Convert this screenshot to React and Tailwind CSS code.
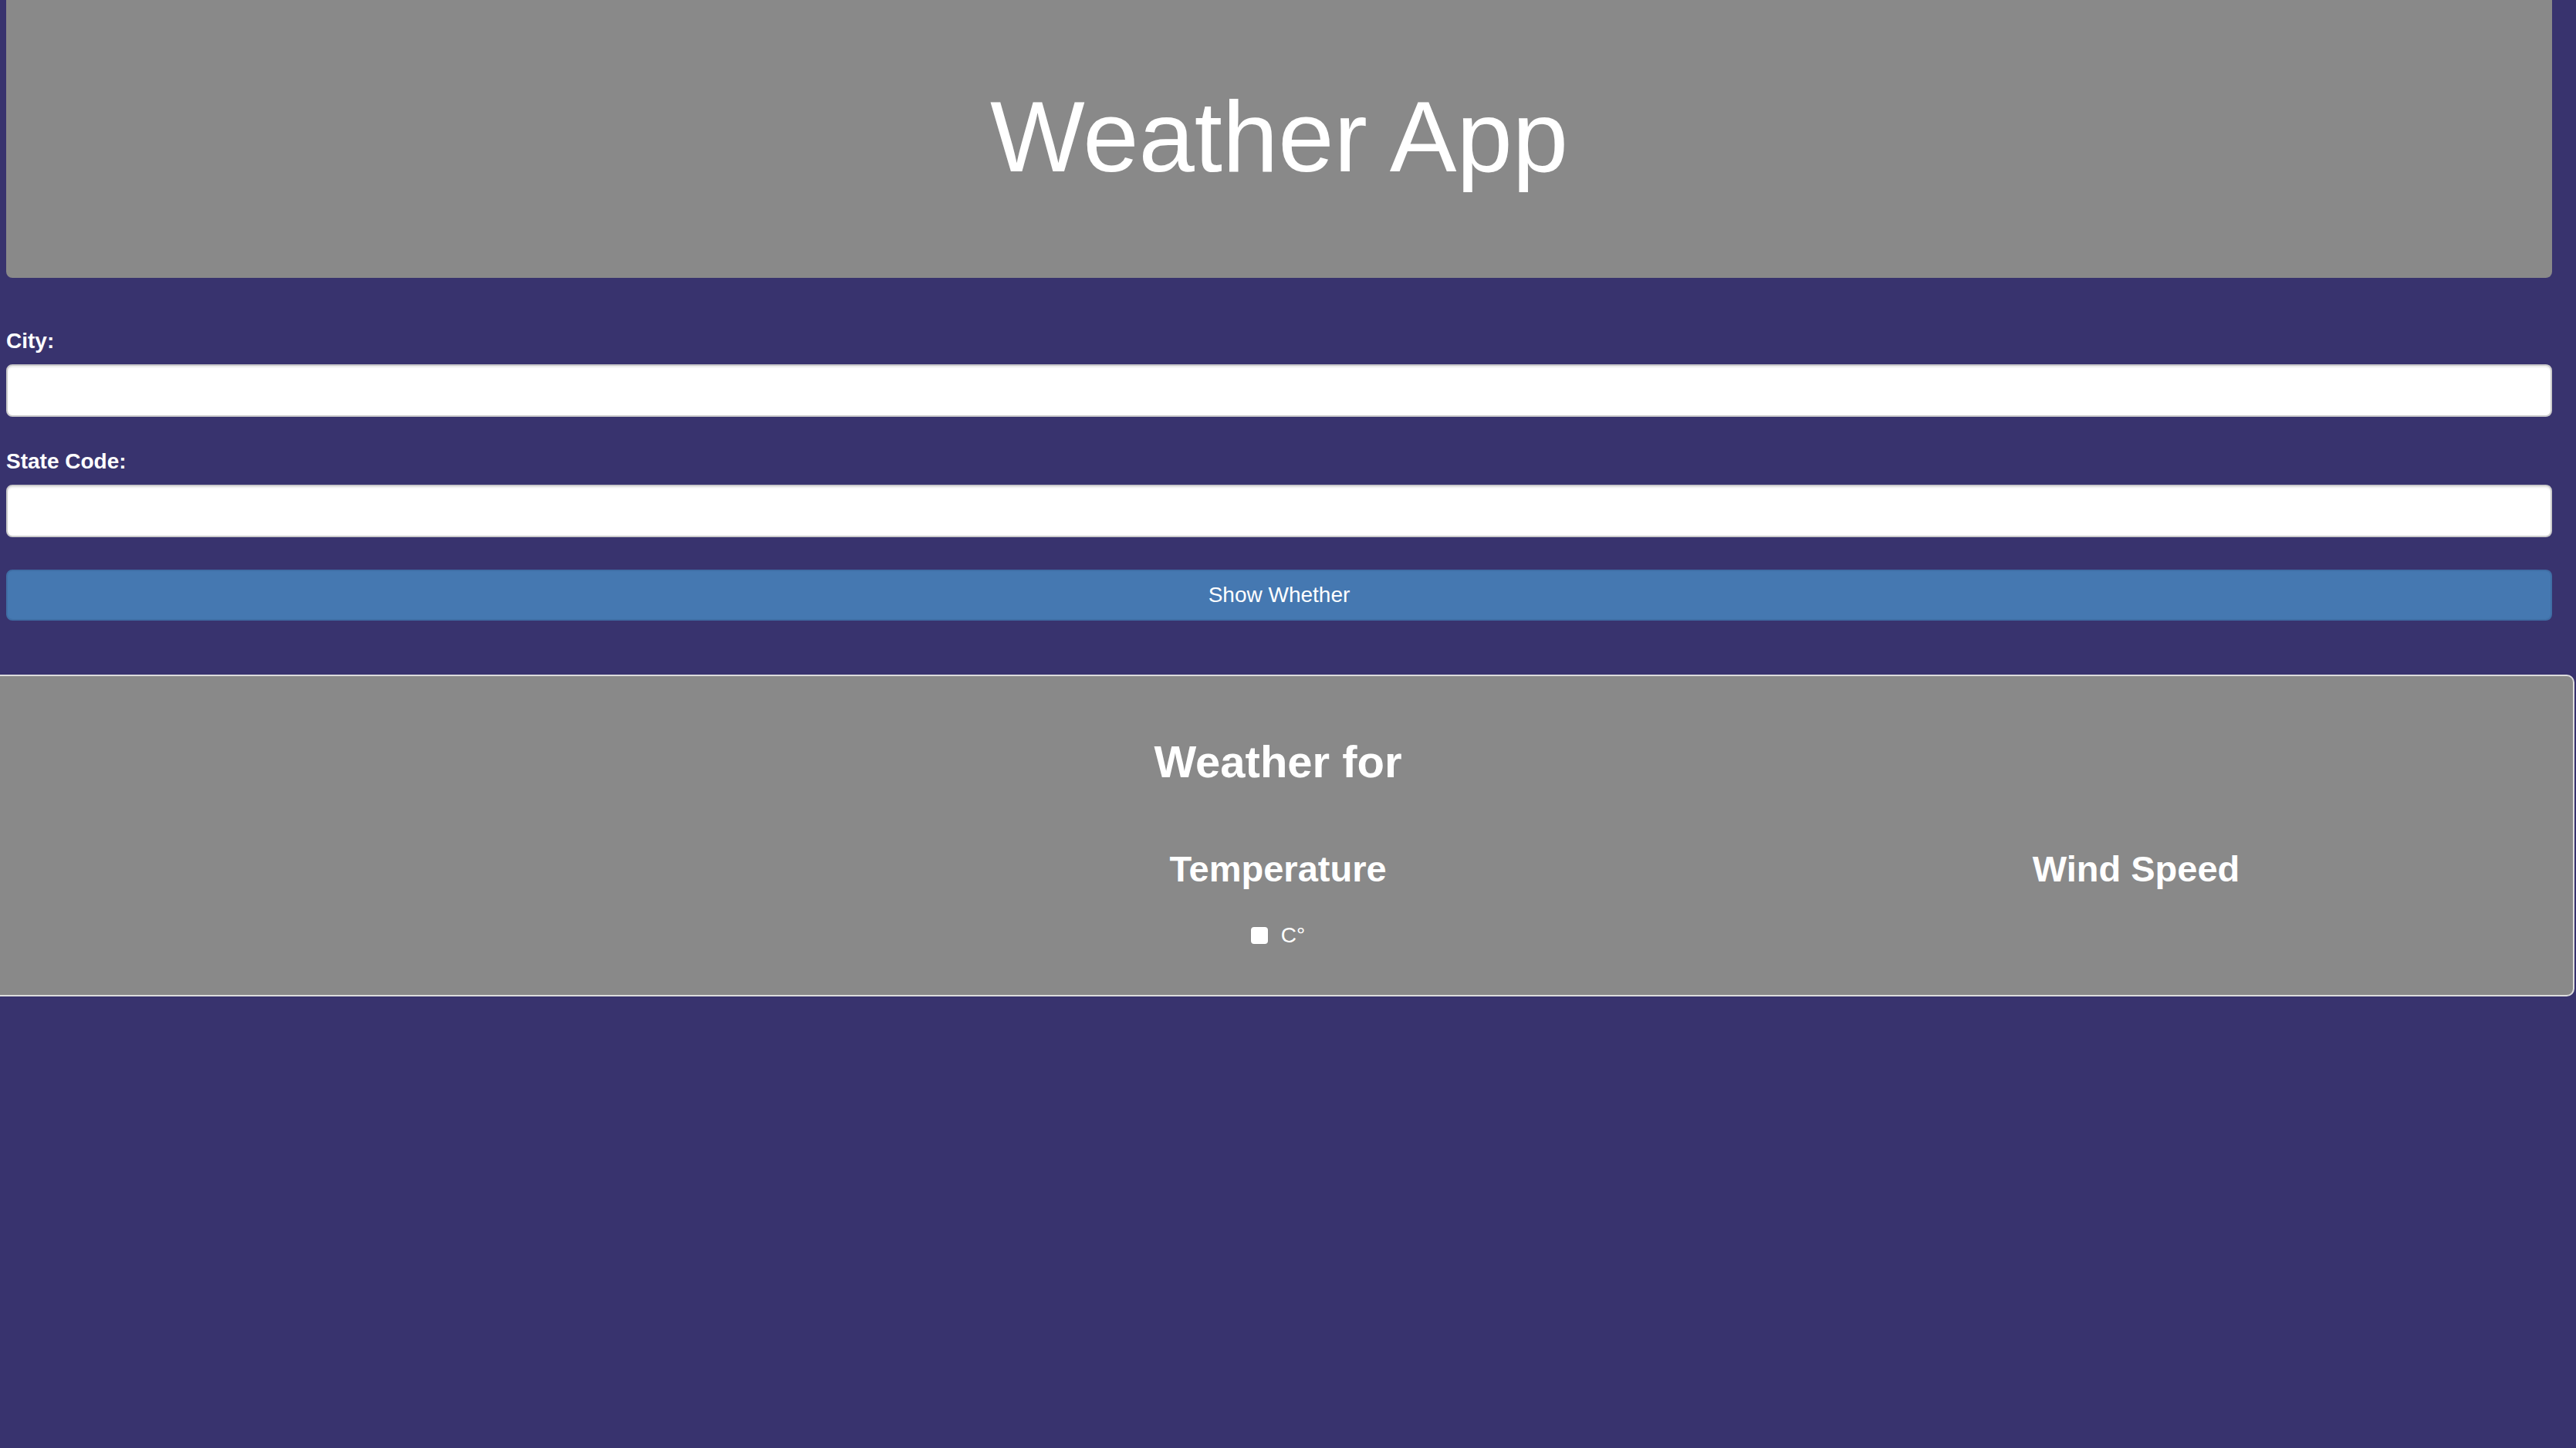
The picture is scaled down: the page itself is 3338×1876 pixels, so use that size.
import { useState } from 'react';

const Field = ({ label, value, onChange, className }) => (
  <div className={className}>
    <label className="block text-[28px] font-bold leading-[40px] text-white mb-[10px]">
      {label}
    </label>
    <input
      type="text"
      value={value}
      onChange={(e) => onChange(e.target.value)}
      className="block w-full h-[68px] px-[24px] bg-white border-2 border-[#cccccc] rounded-[8px] shadow-[inset_0_2px_2px_rgba(0,0,0,0.08)] text-[28px] text-[#555] outline-none"
    />
  </div>
);

export default function App() {
  const [city, setCity] = useState('');
  const [state, setState] = useState('');
  const [celsius, setCelsius] = useState(false);

  return (
    <div className="min-h-screen bg-[#38336e] font-['Liberation_Sans',Arial,sans-serif] text-white">
      {/* header */}
      <header className="ml-[8px] mr-[31px] h-[360px] bg-[#898989] rounded-b-[8px] flex items-center justify-center pb-[6px]">
        <h1 className="text-[130px] leading-none font-normal">Weather App</h1>
      </header>

      {/* search form */}
      <form
        className="ml-[8px] mr-[31px] pt-[62px]"
        onSubmit={(e) => e.preventDefault()}
      >
        <Field label="City:" value={city} onChange={setCity} />
        <Field label="State Code:" value={state} onChange={setState} className="mt-[38px]" />
        <button
          type="submit"
          className="mt-[42px] w-full h-[66px] bg-[#4578b1] border-2 border-[#3f6ea5] rounded-[8px] text-[28px] text-white"
        >
          Show Whether
        </button>
      </form>

      {/* results */}
      <section className="mt-[70px] mr-[2px] bg-[#898989] border-y-2 border-r-2 border-[#dddddd] rounded-r-[10px] pt-[79px] pb-[57px]">
        <h2 className="pr-[22px] text-center text-[58px] leading-[64px] font-bold">Weather for</h2>
        <div className="grid grid-cols-3 -ml-[12px] mr-[10px] mt-[81px]">
          <div />
          <div className="flex flex-col items-center">
            <h3 className="text-[47px] leading-[52px] font-bold">Temperature</h3>
            <label className="mt-[40px] flex items-center gap-[17px] h-[40px] text-[28px]">
              <input
                type="checkbox"
                checked={celsius}
                onChange={(e) => setCelsius(e.target.checked)}
                className="appearance-none w-[22px] h-[22px] bg-white rounded-[4px] shadow-[0_0_1px_rgba(0,0,0,0.3)]"
              />
              C°
            </label>
          </div>
          <div className="flex flex-col items-center">
            <h3 className="text-[47px] leading-[52px] font-bold">Wind Speed</h3>
          </div>
        </div>
      </section>
    </div>
  );
}
